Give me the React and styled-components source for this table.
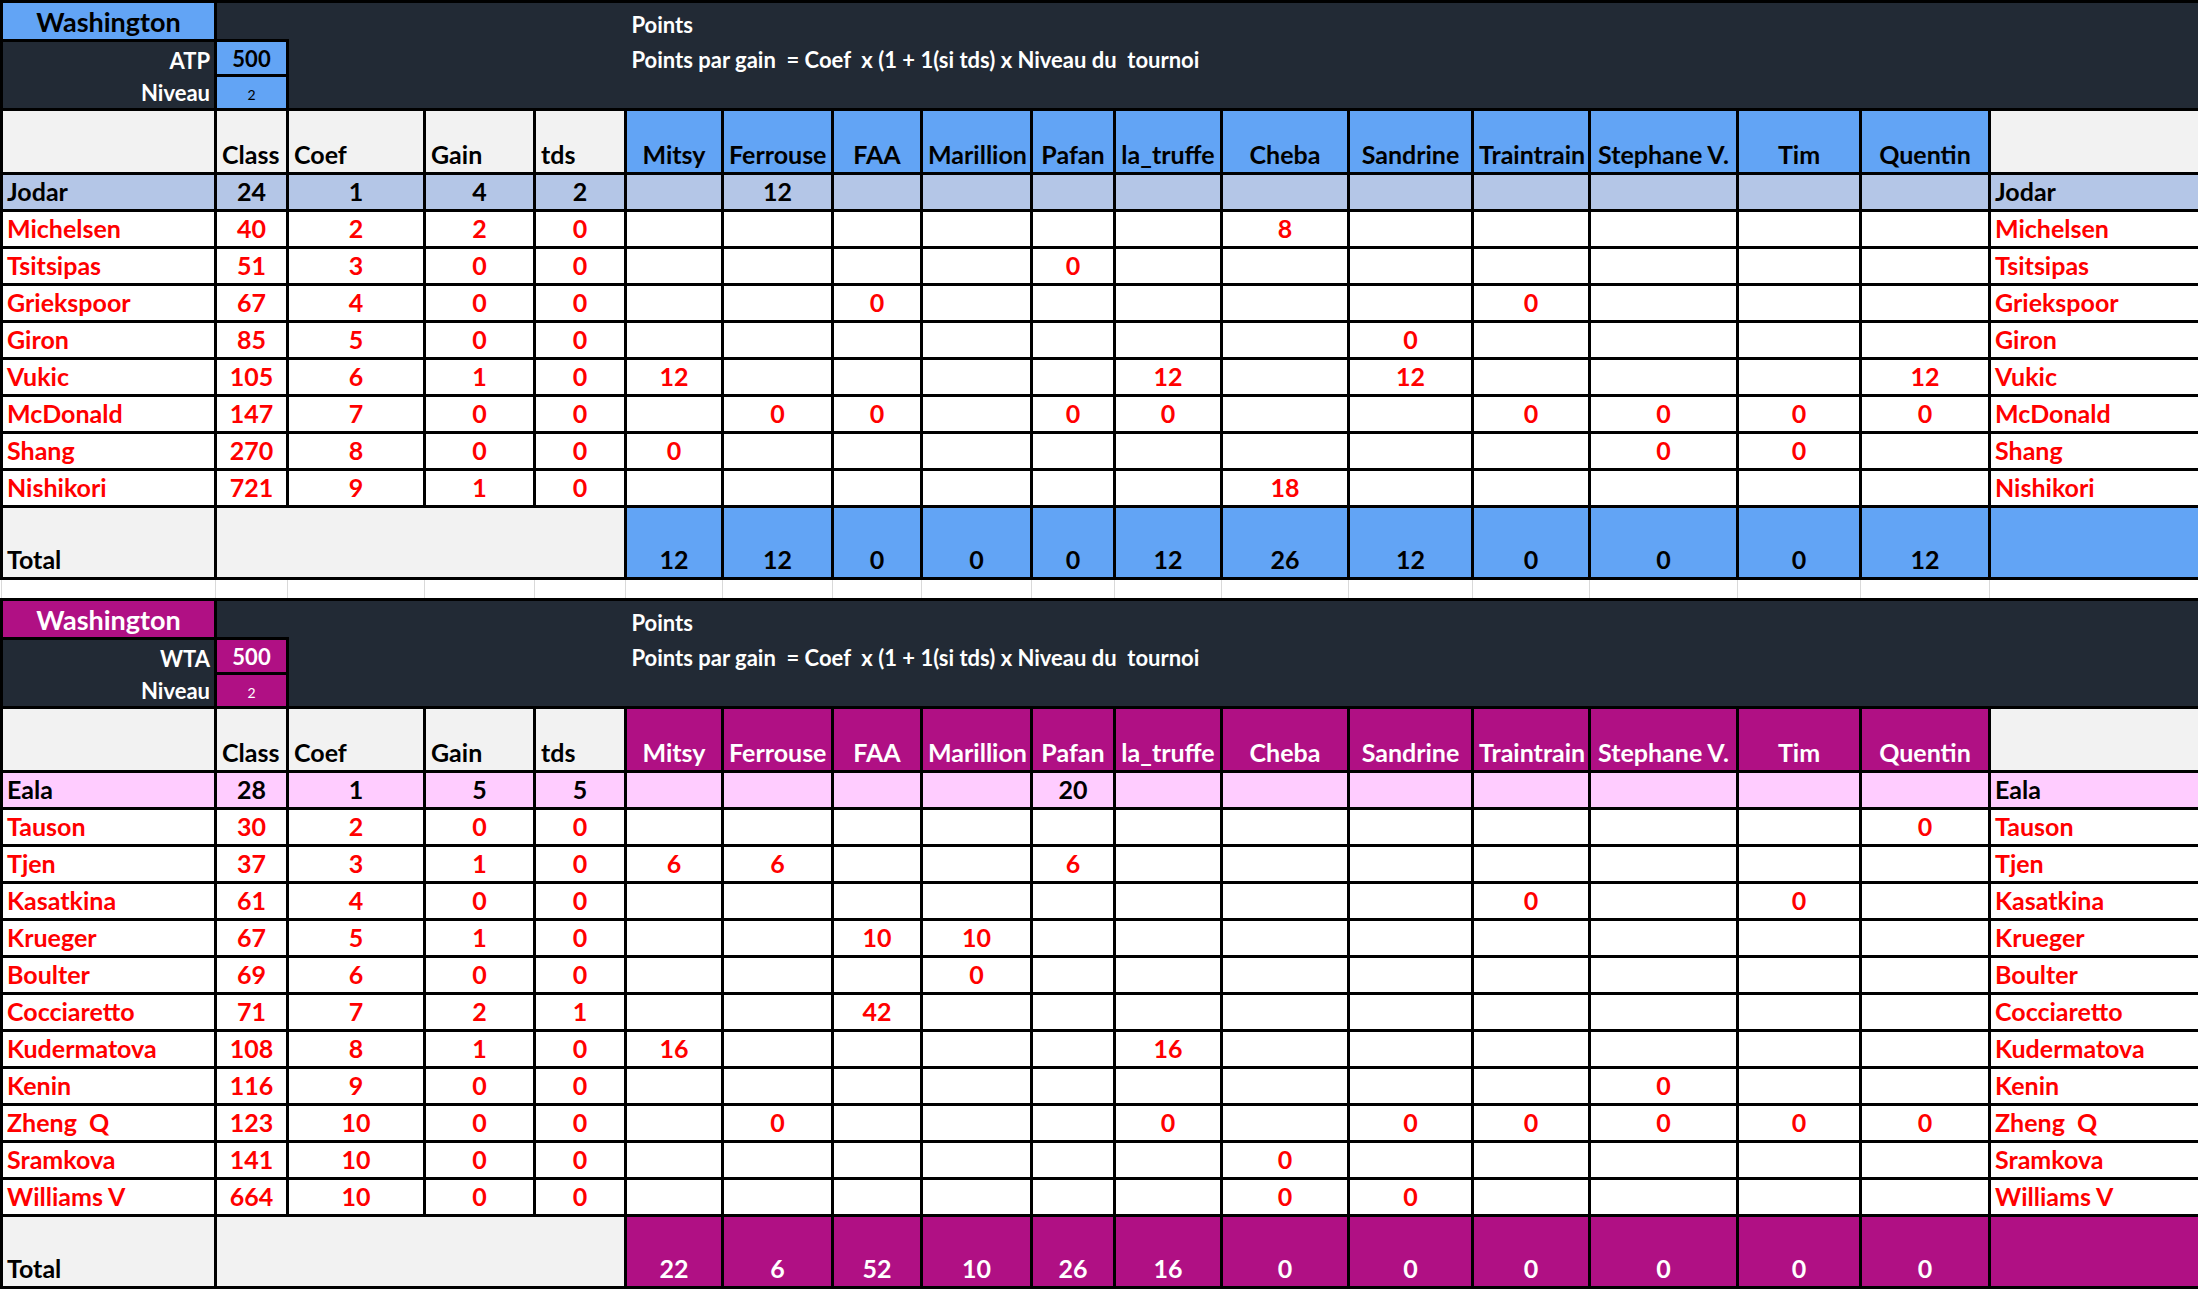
import React from 'react';
import styled, { createGlobalStyle, css } from 'styled-components';

const GlobalStyle = createGlobalStyle`
  html, body { margin: 0; padding: 0; background: #ffffff; }
  body { font-family: Lato, "Open Sans", "DejaVu Sans", sans-serif; }
`;

const COLS = [214, 72, 137, 110, 91, 97, 110, 89, 110, 83, 107, 127, 124, 117, 148, 123, 129, 210];
const PLAYERS = ['Mitsy', 'Ferrouse', 'FAA', 'Marillion', 'Pafan', 'la_truffe', 'Cheba', 'Sandrine', 'Traintrain', 'Stephane V.', 'Tim', 'Quentin'];

const DARK = '#222a35';
const GRAY = '#f2f2f2';
const RED = '#ff0000';

const THEMES = {
  atp: { tour: 'ATP', accent: '#62a4f5', accentText: '#000000', highlight: '#b4c6e7' },
  wta: { tour: 'WTA', accent: '#b01084', accentText: '#ffffff', highlight: '#ffccff' },
};

const atpRows = [
  { name: 'Jodar', v: [24, 1, 4, 2], p: { Ferrouse: 12 } },
  { name: 'Michelsen', v: [40, 2, 2, 0], p: { Cheba: 8 } },
  { name: 'Tsitsipas', v: [51, 3, 0, 0], p: { Pafan: 0 } },
  { name: 'Griekspoor', v: [67, 4, 0, 0], p: { FAA: 0, Traintrain: 0 } },
  { name: 'Giron', v: [85, 5, 0, 0], p: { Sandrine: 0 } },
  { name: 'Vukic', v: [105, 6, 1, 0], p: { Mitsy: 12, la_truffe: 12, Sandrine: 12, Quentin: 12 } },
  { name: 'McDonald', v: [147, 7, 0, 0], p: { Ferrouse: 0, FAA: 0, Pafan: 0, la_truffe: 0, Traintrain: 0, 'Stephane V.': 0, Tim: 0, Quentin: 0 } },
  { name: 'Shang', v: [270, 8, 0, 0], p: { Mitsy: 0, 'Stephane V.': 0, Tim: 0 } },
  { name: 'Nishikori', v: [721, 9, 1, 0], p: { Cheba: 18 } },
];
const atpTotals = [12, 12, 0, 0, 0, 12, 26, 12, 0, 0, 0, 12];

const wtaRows = [
  { name: 'Eala', v: [28, 1, 5, 5], p: { Pafan: 20 } },
  { name: 'Tauson', v: [30, 2, 0, 0], p: { Quentin: 0 } },
  { name: 'Tjen', v: [37, 3, 1, 0], p: { Mitsy: 6, Ferrouse: 6, Pafan: 6 } },
  { name: 'Kasatkina', v: [61, 4, 0, 0], p: { Traintrain: 0, Tim: 0 } },
  { name: 'Krueger', v: [67, 5, 1, 0], p: { FAA: 10, Marillion: 10 } },
  { name: 'Boulter', v: [69, 6, 0, 0], p: { Marillion: 0 } },
  { name: 'Cocciaretto', v: [71, 7, 2, 1], p: { FAA: 42 } },
  { name: 'Kudermatova', v: [108, 8, 1, 0], p: { Mitsy: 16, la_truffe: 16 } },
  { name: 'Kenin', v: [116, 9, 0, 0], p: { 'Stephane V.': 0 } },
  { name: 'Zheng  Q', v: [123, 10, 0, 0], p: { Ferrouse: 0, la_truffe: 0, Sandrine: 0, Traintrain: 0, 'Stephane V.': 0, Tim: 0, Quentin: 0 } },
  { name: 'Sramkova', v: [141, 10, 0, 0], p: { Cheba: 0 } },
  { name: 'Williams V', v: [664, 10, 0, 0], p: { Cheba: 0, Sandrine: 0 } },
];
const wtaTotals = [22, 6, 52, 10, 26, 16, 0, 0, 0, 0, 0, 0];

const Sheet = styled.table`
  border-collapse: collapse;
  table-layout: fixed;
  width: 2198px;
  font-family: Lato, "Open Sans", "DejaVu Sans", sans-serif;
  font-weight: 700;
  font-size: 25px;
  line-height: 1;
`;

const Row = styled.tr`
  height: ${(p) => p.$h}px;
`;

const Cell = styled.td`
  border: 3px solid #000000;
  background: ${(p) => p.$bg || '#ffffff'};
  color: ${(p) => p.$color || '#000000'};
  text-align: ${(p) => p.$align || 'center'};
  vertical-align: bottom;
  padding: 0 5px 5px;
  white-space: pre;
  overflow: hidden;
`;

const NameCell = styled(Cell)`
  text-align: left;
  padding-left: 4px;
`;

const TitleCell = styled(Cell)`
  font-size: 27px;
  vertical-align: middle;
  padding: 0;
`;

const LabelCell = styled(Cell)`
  background: ${DARK};
  color: #ffffff;
  text-align: right;
  font-size: 22px;
  padding: 0 4px 4px;
  ${(p) => p.$open === 'bottom' && css`border-bottom: none;`}
  ${(p) => p.$open === 'top' && css`border-top: none;`}
`;

const ValueCell = styled(Cell)`
  font-size: ${(p) => (p.$small ? 14 : 22)}px;
  font-weight: ${(p) => (p.$small ? 400 : 700)};
  padding-bottom: ${(p) => (p.$small ? 6 : 4)}px;
`;

const DarkCell = styled.td`
  background: ${DARK};
  color: #ffffff;
  border: none;
  ${(p) => p.$top && css`border-top: 3px solid #000000;`}
  ${(p) => p.$right && css`border-right: 3px solid #000000;`}
  text-align: left;
  vertical-align: bottom;
  padding: 0 6px 5px;
  font-size: 22px;
  white-space: pre;
`;

const GapCell = styled.td`
  border: 1px solid #d9d9d9;
  background: #ffffff;
  padding: 0;
`;

function Section({ kind, rows, totals }) {
  const t = THEMES[kind];
  return (
    <tbody>
      <Row $h={39}>
        <TitleCell $bg={t.accent} $color={t.accentText}>Washington</TitleCell>
        <DarkCell colSpan={4} $top />
        <DarkCell colSpan={13} $top $right>Points</DarkCell>
      </Row>
      <Row $h={35}>
        <LabelCell $open="bottom">{t.tour}</LabelCell>
        <ValueCell $bg={t.accent} $color={t.accentText}>500</ValueCell>
        <DarkCell colSpan={3} />
        <DarkCell colSpan={13} $right>{'Points par gain  = Coef  x (1 + 1(si tds) x Niveau du  tournoi'}</DarkCell>
      </Row>
      <Row $h={34}>
        <LabelCell $open="top">Niveau</LabelCell>
        <ValueCell $bg={t.accent} $color={t.accentText} $small>2</ValueCell>
        <DarkCell colSpan={3} />
        <DarkCell colSpan={13} $right />
      </Row>
      <Row $h={64}>
        <Cell $bg={GRAY} />
        {['Class', 'Coef', 'Gain', 'tds'].map((h) => (
          <Cell key={h} $bg={GRAY} $align="left">{h}</Cell>
        ))}
        {PLAYERS.map((pl) => (
          <Cell key={pl} $bg={t.accent} $color={t.accentText}>{pl}</Cell>
        ))}
        <Cell $bg={GRAY} />
      </Row>
      {rows.map((r, i) => {
        const bg = i === 0 ? t.highlight : '#ffffff';
        const color = i === 0 ? '#000000' : RED;
        return (
          <Row $h={37} key={r.name}>
            <NameCell $bg={bg} $color={color}>{r.name}</NameCell>
            {r.v.map((n, j) => (
              <Cell key={j} $bg={bg} $color={color}>{n}</Cell>
            ))}
            {PLAYERS.map((pl) => (
              <Cell key={pl} $bg={bg} $color={color}>{r.p[pl] !== undefined ? r.p[pl] : ''}</Cell>
            ))}
            <NameCell $bg={bg} $color={color}>{r.name}</NameCell>
          </Row>
        );
      })}
      <Row $h={72}>
        <NameCell $bg={GRAY}>Total</NameCell>
        <Cell colSpan={4} $bg={GRAY} />
        {totals.map((n, j) => (
          <Cell key={j} $bg={t.accent} $color={t.accentText}>{n}</Cell>
        ))}
        <Cell $bg={t.accent} />
      </Row>
    </tbody>
  );
}

export default function App() {
  return (
    <>
      <GlobalStyle />
      <Sheet>
        <colgroup>
          {COLS.map((w, i) => (
            <col key={i} style={{ width: w }} />
          ))}
        </colgroup>
        <Section kind="atp" rows={atpRows} totals={atpTotals} />
        <tbody>
          <Row $h={21}>
            {COLS.map((w, i) => (
              <GapCell key={i} />
            ))}
          </Row>
        </tbody>
        <Section kind="wta" rows={wtaRows} totals={wtaTotals} />
      </Sheet>
    </>
  );
}
